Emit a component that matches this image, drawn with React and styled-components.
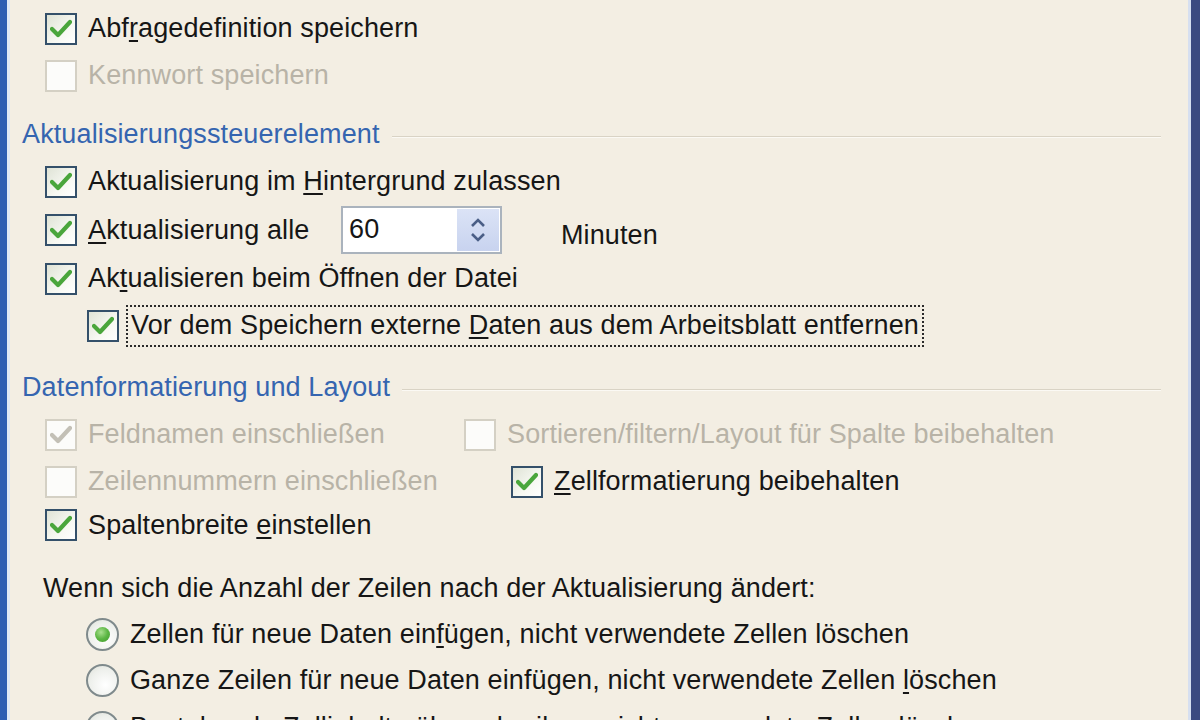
import styled, { createGlobalStyle } from "styled-components";

const Global = createGlobalStyle`
  html, body {
    margin: 0;
    padding: 0;
    background: #f3eee3;
  }
  body {
    font-family: "Liberation Sans", Arial, sans-serif;
    color: #161616;
    overflow: hidden;
  }
`;

const Frame = styled.div`
  box-sizing: border-box;
  width: 1200px;
  height: 720px;
  overflow: hidden;
  background: #f3eee3;
  border-left: 7px solid #2d5db2;
  border-right: 9px solid #3b4a80;
  box-shadow: inset 3px 0 0 #dfe8f4, inset -3px 0 0 #d6dff0;
  padding: 5px 30px 0 15px;
  font-size: 27px;
  letter-spacing: 0.12px;
`;

const Row = styled.div`
  display: flex;
  align-items: center;
  height: ${({ h }) => h ?? 47}px;
  padding-left: ${({ indent }) => indent ?? 23}px;
  color: ${({ disabled }) => (disabled ? "#b8b3a7" : "#161616")};
`;

const Heading = styled.div`
  display: flex;
  align-items: center;
  height: 47px;
  margin-top: ${({ top }) => top}px;
  color: #3565b0;
  gap: 12px;
  &::after {
    content: "";
    flex: 1;
    height: 1px;
    background: #d9d3c5;
    box-shadow: 0 1px 0 #fbf9f4;
    margin-top: 4px;
  }
`;

const Box = styled.span`
  box-sizing: border-box;
  flex: none;
  width: 32px;
  height: 32px;
  margin-right: 11px;
  border: 2px solid ${({ disabled }) => (disabled ? "#d4d0c4" : "#34506a")};
  background: ${({ disabled }) =>
    disabled ? "#fcfcfa" : "linear-gradient(135deg, #dfe3d6 0%, #f7f8f2 60%, #ffffff 100%)"};
  display: flex;
  align-items: center;
  justify-content: center;
`;

const Radio = styled.span`
  box-sizing: border-box;
  flex: none;
  width: 33px;
  height: 33px;
  margin-right: 11px;
  border-radius: 50%;
  border: 2px solid #7f8a8c;
  background: radial-gradient(circle at 60% 65%, #ffffff 0%, #eef0ec 60%, #dcdfd6 100%);
  display: flex;
  align-items: center;
  justify-content: center;
  &::after {
    content: "";
    display: ${({ on }) => (on ? "block" : "none")};
    width: 15px;
    height: 15px;
    border-radius: 50%;
    background: radial-gradient(circle at 40% 35%, #a9e08f 0%, #5cb644 50%, #3f9a2c 100%);
  }
`;

const Label = styled.span`
  white-space: nowrap;
  width: ${({ w }) => (w ? `${w}px` : "auto")};
  flex: none;
`;

const Focus = styled.span`
  white-space: nowrap;
  border: 2px dotted #2a2a2a;
  padding: 3px 3px 4px 3px;
  margin-left: -4px;
`;

const Acc = styled.u`
  text-decoration: underline;
  text-underline-offset: 3px;
`;

const Spin = styled.div`
  box-sizing: border-box;
  display: flex;
  width: 161px;
  height: 48px;
  border: 2px solid #aab3bd;
  background: #ffffff;
`;

const SpinValue = styled.span`
  flex: 1;
  padding: 6px 0 0 6px;
`;

const SpinButtons = styled.div`
  width: 42px;
  display: flex;
  flex-direction: column;
  align-items: center;
  justify-content: center;
  gap: 4px;
  background: linear-gradient(180deg, #dbe3f6 0%, #c8d3ef 100%);
  margin: 1px;
`;

const Unit = styled.span`
  margin-left: 59px;
  padding-top: 10px;
`;

const Columns = styled.div`
  display: grid;
  grid-template-columns: 442px 1fr;
`;

const Question = styled.div`
  height: 47px;
  margin-top: 20px;
  display: flex;
  align-items: center;
  padding-left: 21px;
`;

const Check = ({ disabled }) => (
  <svg width="22" height="20" viewBox="0 0 22 20">
    <path
      d="M2 10 L8 16 L20 3"
      fill="none"
      stroke={disabled ? "#c3c0b6" : "#4aa63c"}
      strokeWidth="4.2"
      strokeLinecap="round"
      strokeLinejoin="round"
    />
  </svg>
);

const Arrow = ({ up }) => (
  <svg width="16" height="10" viewBox="0 0 16 10">
    <path
      d={up ? "M2 8 L8 2 L14 8" : "M2 2 L8 8 L14 2"}
      fill="none"
      stroke="#4a5e86"
      strokeWidth="2.6"
    />
  </svg>
);

function CheckRow({ checked, disabled, indent, h, children }) {
  return (
    <Row disabled={disabled} indent={indent} h={h}>
      <Box disabled={disabled}>{checked && <Check disabled={disabled} />}</Box>
      {children}
    </Row>
  );
}

export default function App() {
  return (
    <>
      <Global />
      <Frame>
        <CheckRow checked>
          <Label>
            Abf<Acc>r</Acc>agedefinition speichern
          </Label>
        </CheckRow>
        <CheckRow disabled>
          <Label>Kennwort speichern</Label>
        </CheckRow>

        <Heading top={12}>Aktualisierungssteuerelement</Heading>
        <CheckRow checked>
          <Label>
            Aktualisierung im <Acc>H</Acc>intergrund zulassen
          </Label>
        </CheckRow>
        <CheckRow checked h={50}>
          <Label w={253}>
            <Acc>A</Acc>ktualisierung alle
          </Label>
          <Spin>
            <SpinValue>60</SpinValue>
            <SpinButtons>
              <Arrow up />
              <Arrow />
            </SpinButtons>
          </Spin>
          <Unit>Minuten</Unit>
        </CheckRow>
        <CheckRow checked>
          <Label>
            Ak<Acc>t</Acc>ualisieren beim Öffnen der Datei
          </Label>
        </CheckRow>
        <CheckRow checked indent={65}>
          <Focus>
            Vor dem Speichern externe <Acc>D</Acc>aten aus dem Arbeitsblatt entfernen
          </Focus>
        </CheckRow>

        <Heading top={15}>Datenformatierung und Layout</Heading>
        <Columns>
          <CheckRow checked disabled>
            <Label>Feldnamen einschließen</Label>
          </CheckRow>
          <CheckRow disabled indent={0}>
            <Label>Sortieren/filtern/Layout für Spalte beibehalten</Label>
          </CheckRow>
          <CheckRow disabled>
            <Label>Zeilennummern einschließen</Label>
          </CheckRow>
          <CheckRow checked indent={47}>
            <Label>
              <Acc>Z</Acc>ellformatierung beibehalten
            </Label>
          </CheckRow>
        </Columns>
        <CheckRow checked h={40}>
          <Label>
            Spaltenbreite <Acc>e</Acc>instellen
          </Label>
        </CheckRow>

        <Question>Wenn sich die Anzahl der Zeilen nach der Aktualisierung ändert:</Question>
        <Row indent={64} h={45}>
          <Radio on />
          <Label>
            Zellen für neue Daten ein<Acc>f</Acc>ügen, nicht verwendete Zellen löschen
          </Label>
        </Row>
        <Row indent={64}>
          <Radio />
          <Label>
            Ganze Zeilen für neue Daten einfügen, nicht verwendete Zellen <Acc>l</Acc>öschen
          </Label>
        </Row>
        <Row indent={64}>
          <Radio />
          <Label>Bestehende Zellinhalte überschreiben, nicht verwendete Zellen löschen</Label>
        </Row>
      </Frame>
    </>
  );
}
